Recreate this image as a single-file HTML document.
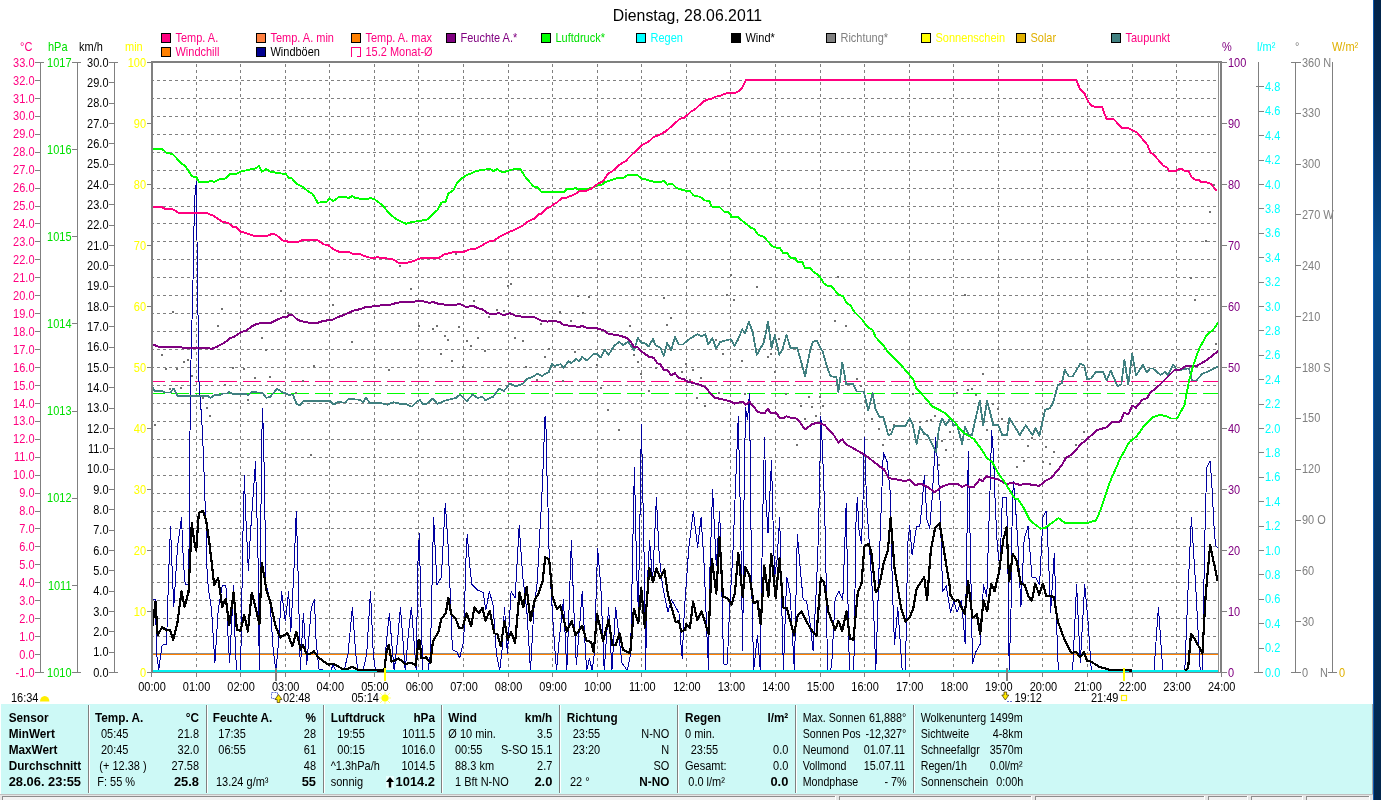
<!DOCTYPE html>
<html lang="de"><head><meta charset="utf-8"><title>Dienstag, 28.06.2011</title>
<style>
html,body{margin:0;padding:0;background:#fff;}
body{width:1381px;height:800px;overflow:hidden;position:relative;font-family:"Liberation Sans", sans-serif;}
svg{position:absolute;left:0;top:0;display:block;will-change:transform;}
svg text{font-family:"Liberation Sans", sans-serif;font-size:12px;}
.ax{stroke:#808080;stroke-width:1;shape-rendering:crispEdges;fill:none;}
.grid{stroke:#808080;stroke-width:1;stroke-dasharray:3 3;shape-rendering:crispEdges;fill:none;}
.b{font-weight:bold;}
.e{text-anchor:end;}
.m{text-anchor:middle;}
</style></head><body>
<svg width="1381" height="800" viewBox="0 0 1381 800">
<rect x="0" y="0" width="1381" height="800" fill="#ffffff"/>
<path class="grid" d="M151 80.5H1218M151 98.5H1218M151 116.5H1218M151 134.5H1218M151 152.5H1218M151 170.5H1218M151 188.5H1218M151 206.5H1218M151 223.5H1218M151 241.5H1218M151 259.5H1218M151 277.5H1218M151 295.5H1218M151 313.5H1218M151 331.5H1218M151 349.5H1218M151 367.5H1218M151 385.5H1218M151 403.5H1218M151 421.5H1218M151 439.5H1218M151 457.5H1218M151 475.5H1218M151 493.5H1218M151 511.5H1218M151 528.5H1218M151 546.5H1218M151 564.5H1218M151 582.5H1218M151 600.5H1218M151 618.5H1218M151 636.5H1218M151 654.5H1218M196.5 64V671M240.5 64V671M285.5 64V671M329.5 64V671M374.5 64V671M418.5 64V671M463.5 64V671M508.5 64V671M552.5 64V671M597.5 64V671M641.5 64V671M686.5 64V671M730.5 64V671M775.5 64V671M820.5 64V671M864.5 64V671M909.5 64V671M953.5 64V671M998.5 64V671M1042.5 64V671M1087.5 64V671M1132.5 64V671M1176.5 64V671"/>
<g fill="none" stroke-linejoin="round" stroke-linecap="butt" shape-rendering="crispEdges">
<path d="M153 381.5H1218" stroke="#ff007f" stroke-width="1" stroke-dasharray="18 6" stroke-dashoffset="6.4" shape-rendering="crispEdges"/>
<path d="M153 393.5H1218" stroke="#00ff00" stroke-width="1" stroke-dasharray="18 6" stroke-dashoffset="6.4" shape-rendering="crispEdges"/>
<path d="M1214 185h0.01M1210 212h0.01M731 275h0.01M757 287h0.01M727 295h0.01M734 300h0.01M838 277h0.01M835 321h0.01M846 326h0.01M716 340h0.01M738 340h0.01M764 339h0.01M779 339h0.01M723 354h0.01M771 354h0.01M281 291h0.01M411 289h0.01M173 312h0.01M222 309h0.01M333 305h0.01M288 313h0.01M218 326h0.01M262 338h0.01M352 342h0.01M266 350h0.01M162 355h0.01M188 360h0.01M184 362h0.01M166 369h0.01M177 369h0.01M233 368h0.01M244 369h0.01M314 366h0.01M389 370h0.01M192 376h0.01M255 378h0.01M270 377h0.01M303 381h0.01M225 385h0.01M170 389h0.01M181 388h0.01M296 393h0.01M203 398h0.01M248 400h0.01M207 408h0.01M210 416h0.01M155 425h0.01M511 284h0.01M508 286h0.01M578 296h0.01M589 297h0.01M664 298h0.01M474 301h0.01M497 310h0.01M504 311h0.01M560 312h0.01M583 313h0.01M489 317h0.01M671 318h0.01M571 321h0.01M541 324h0.01M437 326h0.01M459 327h0.01M433 329h0.01M419 326h0.01M630 326h0.01M667 325h0.01M445 336h0.01M448 340h0.01M478 338h0.01M467 341h0.01M515 338h0.01M523 341h0.01M471 346h0.01M549 349h0.01M485 351h0.01M441 354h0.01M575 352h0.01M545 357h0.01M452 361h0.01M634 355h0.01M638 362h0.01M463 367h0.01M526 367h0.01M597 365h0.01M656 368h0.01M682 372h0.01M641 374h0.01M537 380h0.01M563 381h0.01M601 388h0.01M649 391h0.01M608 410h0.01M619 430h0.01M768 357h0.01M742 361h0.01M686 364h0.01M693 370h0.01M775 372h0.01M701 378h0.01M857 379h0.01M861 386h0.01M690 380h0.01M719 393h0.01M745 394h0.01M786 394h0.01M712 395h0.01M697 398h0.01M809 397h0.01M820 397h0.01M913 394h0.01M705 406h0.01M801 406h0.01M812 407h0.01M823 406h0.01M805 419h0.01M816 416h0.01M872 419h0.01M931 420h0.01M935 416h0.01M920 422h0.01M927 421h0.01M894 425h0.01M879 429h0.01M890 430h0.01M797 445h0.01M883 445h0.01M946 450h0.01M983 374h0.01M968 390h0.01M972 389h0.01M957 393h0.01M976 395h0.01M993 404h0.01M998 409h0.01M1002 419h0.01M987 430h0.01M950 432h0.01M924 434h0.01M1035 430h0.01M1032 438h0.01M1084 432h0.01M942 441h0.01M1028 446h0.01M1046 447h0.01M1076 445h0.01M1054 452h0.01M1024 461h0.01M1043 462h0.01M1050 464h0.01M1017 467h0.01M939 465h0.01M1008 423h0.01M1206 241h0.01M1191 278h0.01M1195 300h0.01M965 295h0.01M1216 344h0.01M400 266h0.01M456 254h0.01M311 455h0.01" stroke="#707070" stroke-width="2" stroke-linecap="square"/>
<path d="M153 653.5H1218" stroke="#909090" stroke-width="1"/>
<path d="M153 654.5H1218" stroke="#ff8000" stroke-width="1"/>
<path d="M151.8 599.7 L155.5 599.7 L156.6 654.0 L158.8 669.4 L162.1 645.2 L166.5 644.1 L168.7 572.6 L170.5 526.4 L172.0 566.0 L173.8 606.7 L177.5 547.3 L181.5 517.6 L183.4 561.6 L185.2 584.7 L188.5 584.7 L189.2 536.0 L189.7 464.0 L190.5 380.0 L192.0 320.0 L193.0 280.0 L194.5 200.0 L196.3 181.8 L197.0 240.0 L198.9 380.0 L200.4 400.0 L202.4 431.0 L203.8 466.0 L205.3 509.0 L206.7 536.0 L206.8 566.0 L208.3 588.0 L211.6 610.0 L214.9 662.8 L218.2 610.0 L222.2 585.4 L225.9 585.4 L228.1 638.6 L229.6 662.8 L233.6 585.4 L235.1 640.8 L236.5 670.5 L240.6 670.5 L242.9 536.0 L244.4 475.2 L245.8 517.0 L248.4 570.4 L249.7 546.0 L251.7 515.0 L255.6 461.0 L256.5 505.0 L257.8 539.6 L259.3 670.5 L260.7 539.6 L261.4 462.0 L262.4 408.0 L263.4 433.0 L264.4 480.0 L266.0 583.6 L269.9 600.0 L273.2 649.6 L275.9 671.0 L278.7 640.8 L281.6 591.3 L285.3 621.0 L288.6 591.3 L290.8 632.0 L294.1 566.0 L296.3 511.0 L297.9 566.0 L300.3 669.4 L303.4 613.3 L306.7 665.0 L311.3 607.8 L314.4 599.7 L316.1 640.8 L319.0 669.4 L330.4 671.0 L333.1 665.0 L335.9 671.0 L344.0 671.0 L348.0 654.0 L352.4 607.1 L355.7 654.0 L357.9 671.0 L363.0 671.0 L366.7 654.0 L370.5 591.3 L373.3 654.0 L375.5 671.0 L384.3 671.0 L386.5 640.8 L389.4 613.3 L391.6 640.8 L394.2 671.0 L397.5 640.8 L400.4 607.1 L403.0 640.8 L405.2 671.0 L408.5 632.0 L411.4 607.1 L414.0 640.8 L416.2 671.0 L417.8 566.0 L419.3 533.7 L420.5 588.0 L422.7 670.5 L428.0 670.5 L430.4 654.0 L433.6 517.1 L437.0 584.7 L441.4 577.0 L445.3 503.0 L448.0 544.0 L450.2 592.4 L452.4 649.6 L456.8 651.8 L459.7 658.0 L463.8 640.8 L465.6 566.0 L467.2 534.3 L469.6 563.8 L471.8 584.3 L477.7 590.2 L483.2 592.4 L485.8 610.0 L489.4 591.3 L493.1 605.6 L496.4 654.0 L499.7 670.5 L501.9 651.8 L504.5 607.1 L507.4 654.0 L511.1 591.3 L515.1 597.9 L519.2 525.9 L522.8 577.0 L526.8 610.0 L530.5 670.5 L533.8 610.0 L537.1 583.6 L540.4 522.0 L541.7 500.0 L543.1 466.7 L544.1 440.0 L545.0 417.0 L545.4 416.0 L546.4 437.0 L547.0 476.0 L548.0 507.0 L548.9 546.0 L550.3 577.0 L553.6 632.0 L556.5 670.5 L559.1 640.8 L563.5 599.7 L566.8 670.5 L569.0 610.0 L571.4 540.1 L573.9 610.0 L576.3 665.0 L580.0 621.0 L582.2 591.3 L584.4 632.0 L586.6 670.5 L589.5 658.4 L592.1 670.5 L594.3 654.0 L597.6 548.4 L600.9 588.0 L604.2 670.5 L608.6 607.1 L611.9 670.5 L615.7 607.1 L618.5 632.0 L621.8 662.8 L627.3 670.5 L630.6 654.0 L632.8 544.0 L634.4 467.2 L636.8 577.0 L638.3 607.8 L639.9 522.0 L641.4 424.2 L644.3 566.0 L645.6 670.5 L647.1 588.0 L649.6 540.1 L652.6 581.4 L656.4 497.1 L659.2 555.0 L662.5 585.8 L668.0 612.2 L671.3 599.7 L675.7 607.1 L679.0 613.3 L681.0 645.0 L682.2 658.4 L684.4 610.0 L688.8 547.3 L693.3 511.2 L697.6 547.3 L701.1 517.1 L704.2 566.0 L706.8 632.0 L708.6 670.5 L709.7 577.0 L712.6 489.3 L716.3 566.0 L719.7 511.2 L721.8 588.0 L723.6 664.0 L727.3 664.0 L729.5 610.0 L732.8 555.0 L735.0 500.0 L738.3 416.0 L740.5 520.0 L742.7 650.7 L744.0 500.0 L745.5 408.0 L747.5 420.0 L749.4 393.5 L750.4 470.0 L751.5 577.0 L753.7 670.5 L757.4 635.3 L760.3 670.5 L762.5 526.4 L764.5 437.9 L766.0 500.0 L768.0 533.0 L771.5 460.8 L773.0 520.0 L774.6 577.0 L777.0 560.0 L779.7 517.1 L781.6 599.0 L783.4 670.5 L786.7 577.0 L790.0 592.4 L794.4 670.5 L797.3 534.3 L801.0 577.0 L803.2 599.7 L806.5 601.2 L809.8 621.0 L813.1 650.7 L816.4 588.0 L818.0 546.0 L819.5 490.0 L820.8 416.0 L822.0 440.0 L823.7 480.0 L825.6 546.0 L827.5 670.5 L830.7 670.5 L831.8 662.8 L835.1 599.0 L838.9 591.3 L842.8 599.7 L846.2 503.0 L847.7 588.0 L849.4 670.5 L853.8 670.5 L856.0 522.0 L857.3 497.1 L859.0 530.0 L861.5 544.0 L863.0 500.0 L864.4 437.9 L866.5 500.0 L871.4 577.0 L873.6 610.0 L875.8 670.5 L879.1 566.0 L881.5 500.0 L883.3 452.2 L887.2 462.0 L890.2 492.0 L892.4 588.0 L894.5 645.0 L897.8 607.8 L902.2 670.5 L905.5 670.5 L907.7 544.0 L909.7 525.9 L912.1 555.0 L916.5 526.4 L919.8 526.4 L922.0 505.0 L924.4 475.0 L927.0 520.0 L929.7 528.6 L932.0 500.0 L935.7 437.9 L938.0 470.0 L940.0 500.0 L941.8 566.0 L942.9 591.3 L946.2 585.8 L950.5 612.2 L953.8 601.2 L957.1 612.2 L961.5 600.1 L965.2 644.1 L966.8 546.0 L968.3 451.8 L970.3 546.0 L972.5 664.0 L975.8 651.8 L980.2 644.1 L983.5 584.7 L986.8 596.8 L988.2 546.0 L990.0 491.0 L991.6 430.6 L993.6 455.0 L994.7 491.0 L996.1 522.0 L997.3 546.0 L1000.0 570.4 L1001.8 511.7 L1002.8 497.0 L1006.4 497.0 L1007.5 532.0 L1009.2 670.5 L1011.0 610.0 L1012.3 503.0 L1013.5 481.2 L1015.0 500.0 L1016.4 520.0 L1018.0 546.0 L1020.9 607.1 L1024.2 538.5 L1028.1 526.3 L1031.9 577.0 L1035.6 577.0 L1039.6 584.7 L1042.9 517.6 L1045.4 511.7 L1046.4 511.2 L1048.4 555.0 L1050.6 612.2 L1054.3 553.9 L1056.1 610.0 L1058.3 670.5 L1072.6 670.5 L1076.6 584.7 L1080.3 662.8 L1084.7 584.7 L1088.0 621.0 L1091.3 670.5 L1154.0 670.5 L1158.4 607.1 L1162.8 670.5 L1184.8 670.5 L1188.1 588.0 L1191.4 517.2 L1195.8 588.0 L1200.2 670.5 L1202.4 670.5 L1204.6 546.0 L1206.0 493.0 L1206.6 468.0 L1210.2 461.0 L1212.2 491.0 L1214.3 532.0 L1215.7 546.0 L1217.8 547.3" stroke="#0000a0" stroke-width="1"/>
<path d="M153 671.1H1218.5" stroke="#00f0f0" stroke-width="1.5"/>
<path d="M151.6 386.2 L154.9 391.0 L161.7 391.0 L164.7 392.4 L170.5 392.4 L173.5 388.5 L177.4 395.7 L198.9 395.9 L207.7 395.9 L210.6 397.9 L214.5 395.0 L219.4 395.3 L223.3 393.4 L227.2 393.4 L229.2 392.0 L233.1 393.8 L245.8 393.8 L247.8 395.3 L251.7 392.0 L262.4 392.8 L266.3 397.9 L270.2 396.7 L277.1 388.9 L282.9 392.4 L288.8 394.8 L292.7 394.4 L296.6 404.1 L300.5 405.1 L303.5 400.8 L329.9 400.8 L333.8 404.5 L337.7 402.2 L345.5 402.6 L348.4 398.9 L360.2 399.8 L363.1 402.2 L366.0 397.9 L369.9 403.2 L376.8 403.2 L379.7 402.8 L387.5 404.7 L393.4 402.2 L399.3 403.6 L406.1 404.1 L412.0 406.7 L416.9 401.6 L420.0 400.2 L422.8 403.8 L426.7 403.8 L432.6 398.7 L437.5 403.8 L446.3 400.2 L456.1 397.9 L460.0 394.4 L466.8 401.2 L472.7 394.4 L477.6 397.9 L482.4 396.9 L485.4 400.2 L493.2 396.7 L499.1 388.9 L504.0 390.9 L509.8 383.6 L515.7 386.2 L522.5 384.0 L527.4 378.7 L532.3 377.2 L537.2 373.8 L542.1 375.8 L548.9 371.9 L551.9 364.1 L554.8 366.0 L560.7 364.1 L563.6 368.0 L568.5 361.1 L571.4 363.1 L576.3 358.8 L579.2 361.5 L582.2 356.8 L587.0 360.7 L593.9 353.7 L596.8 353.7 L600.7 357.6 L604.6 349.8 L608.5 354.9 L614.4 345.5 L619.3 342.0 L623.2 345.1 L628.1 341.6 L634.0 350.4 L637.9 338.1 L641.8 343.1 L645.7 343.5 L648.6 346.5 L653.1 338.7 L655.5 345.5 L660.4 347.8 L663.7 355.7 L667.2 343.0 L671.1 350.4 L675.0 336.7 L678.9 344.5 L682.8 344.5 L685.0 342.6 L690.8 338.1 L697.6 334.2 L701.5 336.2 L705.4 334.2 L708.3 344.6 L712.3 338.1 L716.2 348.5 L720.1 342.0 L730.8 339.1 L734.3 345.9 L738.7 338.1 L742.2 329.3 L745.1 333.2 L748.8 321.5 L752.7 332.3 L756.8 354.7 L764.1 342.0 L768.0 321.5 L771.5 347.9 L774.8 335.2 L779.3 354.7 L782.6 348.9 L786.5 335.2 L790.5 347.9 L797.3 347.9 L805.1 376.2 L810.0 350.8 L812.9 341.6 L816.9 341.1 L822.7 351.8 L826.6 365.5 L830.5 376.2 L836.4 377.2 L838.4 391.9 L842.3 362.6 L846.2 384.1 L853.0 384.1 L856.9 391.5 L863.8 391.5 L868.3 410.5 L872.6 393.3 L875.5 409.5 L879.4 416.9 L883.3 416.9 L888.2 434.9 L891.1 434.5 L894.1 426.1 L905.8 425.7 L909.7 418.3 L912.6 424.5 L916.6 443.7 L920.1 427.1 L924.4 433.9 L927.3 434.9 L936.1 452.5 L939.0 428.1 L942.0 418.3 L945.9 425.1 L950.0 418.3 L951.4 418.8 L953.3 425.3 L957.2 425.3 L962.1 443.8 L965.0 427.2 L969.0 435.0 L971.9 435.0 L979.7 400.8 L983.2 425.3 L987.1 400.8 L993.4 425.3 L998.3 425.3 L1002.2 435.0 L1007.1 435.0 L1009.4 417.8 L1019.8 435.0 L1025.7 425.3 L1032.5 435.0 L1035.4 428.2 L1039.3 436.0 L1045.2 409.6 L1050.1 408.1 L1053.0 402.8 L1057.9 385.2 L1061.8 383.2 L1064.8 369.6 L1068.7 376.4 L1072.6 376.4 L1080.4 363.7 L1084.3 365.6 L1087.2 379.3 L1091.1 378.3 L1096.0 371.9 L1102.9 371.9 L1106.8 380.3 L1110.7 370.5 L1117.5 386.2 L1121.4 384.2 L1124.4 359.8 L1128.3 384.2 L1132.2 353.9 L1136.1 375.4 L1143.0 364.7 L1146.9 372.5 L1150.0 368.6 L1153.0 368.4 L1160.5 375.0 L1165.0 372.0 L1168.0 375.0 L1173.4 364.5 L1177.0 370.5 L1184.5 369.0 L1189.0 368.4 L1192.0 380.4 L1196.5 380.4 L1202.5 373.5 L1207.0 372.0 L1218.1 366.6" stroke="#408080" stroke-width="1.8"/>
<path d="M151.6 343.9 L157.8 346.5 L169.6 347.1 L181.3 347.1 L183.2 348.0 L206.7 348.0 L211.6 348.8 L217.4 346.5 L225.3 342.2 L230.2 338.1 L234.1 336.7 L240.9 332.2 L246.8 330.4 L251.7 326.3 L256.5 324.0 L261.4 323.0 L271.2 322.6 L277.1 319.7 L282.9 317.1 L286.9 316.8 L289.8 314.8 L292.7 315.2 L296.6 319.1 L300.5 321.1 L308.4 322.6 L318.1 322.6 L324.0 320.7 L331.8 320.1 L337.7 317.1 L343.5 315.2 L353.3 310.7 L361.1 308.9 L366.0 306.8 L374.8 306.4 L380.7 305.4 L389.5 305.0 L394.4 303.5 L402.2 301.9 L410.0 302.5 L420.0 300.5 L429.7 302.9 L432.6 301.9 L438.5 303.9 L446.3 304.8 L456.1 304.8 L460.0 303.9 L465.8 306.8 L473.7 306.0 L477.6 308.3 L482.4 309.3 L487.3 313.2 L492.2 314.2 L499.1 313.2 L504.0 315.2 L509.8 313.2 L516.7 316.2 L524.5 316.8 L534.3 317.1 L542.1 321.1 L547.9 321.6 L551.9 320.7 L559.7 322.0 L563.6 325.0 L571.4 325.9 L579.2 326.9 L582.2 325.9 L587.0 327.9 L596.8 328.3 L603.7 330.4 L608.5 333.8 L620.3 335.7 L627.1 338.1 L631.0 342.2 L634.0 347.1 L637.9 347.4 L641.8 351.7 L649.6 357.2 L653.5 357.6 L657.4 363.1 L660.4 364.5 L664.3 370.5 L667.2 369.9 L671.1 375.2 L675.0 373.3 L678.9 377.8 L685.0 379.7 L687.8 381.7 L697.6 384.1 L705.4 387.0 L709.3 391.9 L715.2 397.8 L721.1 399.1 L729.9 401.1 L734.7 403.6 L742.6 401.7 L745.5 405.0 L749.4 401.7 L754.3 407.5 L758.2 412.4 L765.0 412.8 L768.0 408.9 L770.9 413.4 L775.8 412.4 L779.7 417.9 L783.6 417.9 L786.5 416.3 L791.4 417.9 L797.3 418.7 L805.1 429.6 L812.9 423.6 L819.8 423.2 L824.7 425.1 L834.4 435.9 L838.4 442.7 L842.3 439.2 L846.2 444.7 L852.0 447.6 L865.7 455.4 L880.0 466.7 L883.9 469.3 L888.8 478.1 L899.6 480.0 L904.4 481.0 L910.3 480.0 L915.2 484.9 L921.1 483.9 L928.9 487.8 L934.7 492.3 L941.6 486.9 L948.4 484.3 L958.2 484.3 L962.1 486.9 L966.0 484.9 L969.0 486.9 L973.8 486.9 L979.7 479.4 L982.6 481.4 L986.5 476.1 L991.4 478.1 L997.3 479.0 L1006.1 483.9 L1012.9 482.9 L1019.8 484.9 L1026.6 483.9 L1039.3 485.9 L1045.2 481.0 L1051.1 478.1 L1056.0 472.2 L1061.8 465.3 L1065.7 458.1 L1071.6 454.6 L1081.4 443.8 L1087.2 439.0 L1097.0 430.2 L1106.8 427.2 L1111.7 422.3 L1120.5 421.4 L1124.0 412.6 L1128.3 414.5 L1132.2 405.7 L1136.1 407.7 L1142.0 399.9 L1146.9 398.3 L1150.0 393.0 L1159.0 385.5 L1166.5 378.0 L1174.0 370.5 L1180.0 369.6 L1186.0 366.0 L1196.5 366.0 L1207.0 360.0 L1218.1 351.0" stroke="#800080" stroke-width="2"/>
<path d="M151.8 630.9 L155.5 601.7 L157.7 635.3 L162.1 627.0 L166.5 630.5 L169.8 629.8 L173.1 639.7 L177.5 622.1 L181.5 591.3 L184.5 606.7 L188.5 592.4 L191.8 523.1 L194.0 539.6 L196.2 550.6 L198.8 513.2 L202.8 510.6 L206.1 519.8 L209.4 542.9 L214.2 584.7 L218.2 578.1 L222.2 606.7 L225.9 599.0 L229.2 625.4 L233.6 592.4 L236.9 629.8 L240.6 630.9 L244.2 614.9 L247.9 631.6 L251.7 592.8 L255.6 607.8 L259.4 624.3 L261.8 562.7 L264.4 577.0 L266.6 591.3 L269.9 600.1 L275.4 625.4 L280.3 637.5 L287.5 633.1 L292.4 646.3 L296.3 631.6 L300.7 649.6 L302.9 645.2 L306.7 654.0 L310.6 653.6 L313.9 651.4 L318.3 657.3 L328.2 664.6 L333.1 663.9 L342.5 668.8 L348.0 668.8 L352.4 666.8 L357.9 669.9 L381.0 670.5 L384.3 670.5 L386.5 651.8 L388.7 645.2 L391.6 661.7 L398.6 658.4 L405.2 663.9 L411.8 662.8 L415.8 665.5 L418.4 640.8 L419.4 639.7 L421.6 658.4 L426.0 657.3 L430.4 662.8 L433.0 640.8 L438.1 633.1 L441.4 618.8 L445.8 613.3 L448.4 597.9 L451.3 614.4 L455.7 618.8 L459.0 627.6 L462.3 628.3 L466.7 613.3 L471.1 626.5 L474.4 607.2 L478.8 613.3 L482.5 607.8 L485.4 620.6 L489.8 611.1 L494.2 633.1 L497.5 634.7 L500.8 646.3 L504.5 621.0 L507.8 639.7 L511.1 632.0 L515.1 643.0 L519.5 592.4 L523.3 607.2 L526.6 586.9 L530.5 621.0 L534.9 599.0 L538.2 594.6 L542.6 581.4 L545.3 557.2 L549.2 559.4 L552.5 596.8 L556.9 608.9 L560.2 605.6 L566.8 631.6 L571.7 621.0 L575.6 635.3 L582.2 625.9 L586.6 640.8 L591.0 641.9 L593.7 651.8 L597.2 614.4 L603.1 640.8 L608.6 619.9 L612.4 645.2 L615.7 645.2 L619.6 633.6 L622.9 649.6 L630.2 653.4 L633.9 608.9 L638.3 623.2 L641.2 588.0 L644.9 627.6 L649.3 568.2 L653.1 582.5 L656.4 568.2 L660.3 578.1 L664.3 569.3 L668.0 594.6 L675.7 622.1 L679.0 621.0 L681.2 631.6 L685.0 629.8 L686.2 624.3 L689.9 627.6 L693.2 601.7 L697.2 619.9 L701.6 611.1 L708.6 634.2 L711.9 559.4 L716.3 593.5 L719.6 537.4 L722.9 596.8 L727.3 597.9 L731.7 604.5 L735.0 592.4 L738.3 552.8 L742.7 596.8 L745.3 567.1 L749.3 574.8 L753.7 603.4 L757.4 601.2 L760.7 624.3 L764.3 566.0 L768.4 596.8 L771.3 553.9 L775.7 597.9 L779.4 558.3 L783.4 607.8 L786.7 607.8 L794.0 634.7 L797.7 615.5 L801.5 611.1 L809.8 627.6 L816.4 636.0 L820.8 578.1 L824.1 582.5 L828.5 612.2 L835.1 629.8 L838.4 621.0 L842.2 630.9 L846.6 611.1 L849.9 638.6 L853.4 639.7 L857.8 592.4 L861.5 583.6 L864.4 546.2 L868.8 544.0 L871.4 552.8 L875.8 592.4 L879.1 586.9 L883.5 563.8 L887.9 550.6 L890.6 517.6 L894.5 568.2 L901.1 607.8 L905.5 621.5 L909.9 616.6 L913.2 608.9 L916.5 589.1 L924.2 577.0 L927.1 600.1 L930.8 550.6 L935.2 527.5 L939.6 523.1 L944.0 550.6 L950.0 588.0 L950.5 595.7 L954.9 601.2 L958.2 600.1 L964.8 614.4 L968.1 581.4 L972.5 617.7 L976.9 614.4 L980.2 634.2 L983.5 600.1 L987.2 611.1 L991.2 583.6 L994.5 591.3 L998.9 572.6 L1003.3 539.6 L1006.6 527.5 L1009.2 581.4 L1012.8 553.9 L1016.5 560.5 L1020.9 583.6 L1024.6 584.7 L1028.6 596.8 L1031.9 600.6 L1035.2 583.6 L1039.2 594.6 L1042.9 583.6 L1046.2 595.7 L1053.9 596.8 L1057.7 621.0 L1064.9 640.8 L1071.5 652.9 L1075.9 651.8 L1080.3 657.3 L1084.1 651.8 L1086.9 660.6 L1091.3 661.7 L1099.0 666.8 L1110.0 669.9 L1132.0 670.5" stroke="#000" stroke-width="2.2"/>
<path d="M1184.8 670.5 L1188.1 668.3 L1191.0 633.6 L1195.8 640.8 L1202.4 653.4 L1205.7 594.6 L1210.1 545.1 L1217.8 581.4" stroke="#000" stroke-width="2.2"/>
<path d="M151.6 149.0 L162.1 149.0 L166.6 152.9 L172.5 153.9 L181.3 163.2 L185.2 166.2 L192.0 176.3 L196.3 177.3 L198.9 181.8 L207.7 181.8 L210.6 180.8 L214.5 181.8 L220.4 178.9 L225.3 178.5 L229.8 174.4 L236.0 174.0 L241.9 171.1 L247.8 170.1 L251.7 169.1 L255.6 168.5 L258.9 165.8 L261.8 171.6 L266.3 169.1 L270.2 171.6 L277.1 173.0 L285.9 174.0 L288.4 177.5 L291.7 178.3 L296.6 183.8 L302.5 186.7 L308.4 191.6 L312.3 193.5 L317.7 202.7 L326.9 201.7 L329.5 198.4 L333.4 201.0 L338.7 197.1 L345.5 197.1 L348.4 198.0 L352.3 196.1 L355.3 198.0 L365.1 199.4 L370.9 198.0 L374.8 199.4 L382.6 205.3 L389.5 213.7 L396.3 219.3 L406.1 223.8 L412.0 221.9 L420.0 220.9 L421.8 220.5 L427.7 219.3 L433.6 213.1 L437.5 210.2 L441.4 202.7 L445.9 201.4 L448.2 193.5 L453.1 190.6 L457.0 182.8 L462.9 177.5 L467.8 174.6 L471.7 173.4 L475.6 171.1 L483.4 169.7 L490.3 169.1 L493.6 171.1 L497.1 169.1 L501.0 171.6 L505.9 171.6 L510.8 169.7 L515.7 169.1 L520.6 169.1 L524.5 175.9 L533.3 186.3 L537.2 187.1 L541.1 191.6 L564.6 191.6 L567.5 188.7 L573.4 188.7 L575.3 187.7 L578.2 189.6 L583.1 189.0 L588.0 188.7 L591.9 188.1 L596.8 185.3 L601.7 184.7 L605.6 181.8 L609.5 180.8 L614.4 178.9 L618.3 177.9 L623.2 177.9 L627.1 175.4 L637.9 175.4 L641.8 178.9 L645.7 179.5 L649.6 180.8 L654.5 181.8 L661.3 181.8 L664.3 180.8 L667.2 184.7 L672.1 183.8 L677.0 188.3 L680.9 189.6 L685.0 190.6 L689.8 191.0 L693.7 195.5 L700.5 196.9 L704.4 200.4 L709.3 200.8 L711.7 206.6 L719.1 206.6 L724.0 211.5 L727.9 212.1 L731.2 215.4 L731.2 217.0 L737.7 217.0 L750.4 227.4 L754.3 229.3 L758.2 234.8 L764.1 237.1 L771.9 245.9 L775.8 247.5 L779.7 247.9 L783.0 252.8 L787.1 252.8 L790.5 258.1 L795.3 258.1 L797.3 262.0 L802.2 262.0 L805.1 267.8 L810.0 267.8 L812.9 271.4 L818.8 275.3 L823.7 283.1 L827.6 286.0 L831.5 286.0 L838.4 294.8 L843.2 296.4 L846.2 302.6 L850.1 305.0 L854.0 311.4 L861.8 319.3 L867.7 327.1 L872.6 330.0 L875.5 336.9 L884.3 346.6 L887.2 351.5 L892.1 356.0 L901.5 365.6 L913.2 379.3 L916.2 388.1 L927.9 400.8 L931.8 406.1 L944.5 412.6 L955.3 422.7 L958.2 427.2 L964.1 433.1 L973.8 439.0 L981.7 449.7 L986.5 457.5 L992.4 462.4 L998.3 473.2 L1005.1 482.9 L1010.0 490.8 L1014.9 498.6 L1017.8 499.0 L1022.7 506.0 L1030.0 520.5 L1040.5 528.6 L1045.0 528.0 L1058.5 518.1 L1064.5 522.6 L1088.5 522.6 L1096.0 520.5 L1100.5 510.0 L1109.5 483.0 L1120.0 459.0 L1129.0 442.5 L1136.5 436.5 L1144.0 426.0 L1153.0 417.0 L1160.5 414.9 L1166.5 416.4 L1171.0 418.5 L1177.0 418.5 L1184.5 405.0 L1189.0 381.0 L1193.5 364.5 L1199.5 348.0 L1207.0 334.5 L1213.0 330.0 L1218.1 322.5" stroke="#00ff00" stroke-width="1.9"/>
<path d="M151.6 207.2 L162.1 207.2 L165.6 209.2 L172.5 209.2 L179.3 213.1 L206.7 213.1 L212.6 215.4 L218.4 219.0 L222.7 221.9 L228.2 222.9 L233.1 226.8 L236.0 227.2 L240.9 231.7 L247.8 233.6 L253.6 235.6 L267.3 235.6 L273.2 233.6 L277.1 235.6 L282.9 240.5 L286.9 240.9 L288.8 242.4 L293.7 241.8 L296.6 242.4 L302.5 240.1 L317.2 240.1 L324.0 244.4 L327.9 245.0 L333.8 249.6 L338.7 251.6 L347.5 251.6 L352.3 253.6 L359.2 253.8 L363.1 255.5 L369.0 257.5 L374.8 257.9 L377.8 257.1 L380.7 258.1 L386.6 258.4 L392.4 259.0 L398.3 262.6 L408.1 262.6 L413.9 261.0 L420.0 258.4 L438.5 258.1 L444.3 254.5 L453.1 252.2 L463.9 251.8 L468.8 249.6 L475.6 248.7 L481.5 245.7 L486.4 242.8 L490.3 241.0 L494.2 240.5 L499.1 236.9 L508.8 232.1 L515.7 229.3 L522.5 225.8 L527.4 221.9 L534.3 218.6 L538.2 214.5 L541.1 213.7 L547.0 208.2 L549.9 207.2 L553.8 204.3 L556.7 202.7 L561.6 198.4 L566.5 197.8 L575.3 193.9 L579.2 191.2 L587.0 190.6 L591.9 188.3 L597.8 183.8 L602.7 181.4 L608.5 173.4 L612.5 171.1 L619.3 164.8 L626.1 160.7 L632.0 154.4 L635.9 151.1 L641.8 145.2 L648.6 141.7 L653.5 137.2 L661.3 133.9 L666.2 131.0 L680.0 118.7 L683.9 118.1 L690.8 111.8 L695.6 108.9 L703.5 101.4 L707.4 99.7 L710.3 99.1 L716.2 96.6 L721.1 95.6 L724.0 94.2 L728.9 92.8 L735.7 92.8 L738.7 91.3 L742.2 87.8 L744.5 83.1 L746.1 79.9 L950.0 79.9 L1076.1 79.9 L1080.1 89.3 L1084.9 94.2 L1087.9 101.1 L1091.8 105.9 L1094.7 106.9 L1102.1 106.9 L1106.4 118.7 L1113.3 118.7 L1121.7 127.8 L1128.0 127.8 L1136.8 132.3 L1147.5 145.0 L1150.4 152.3 L1154.3 155.2 L1163.1 165.6 L1167.1 167.5 L1169.0 170.9 L1175.9 170.9 L1178.8 168.9 L1181.7 168.9 L1183.7 170.5 L1188.6 170.9 L1191.5 177.3 L1195.4 179.6 L1199.3 180.0 L1201.3 182.0 L1206.2 182.0 L1211.0 184.1 L1216.9 191.0" stroke="#ff007f" stroke-width="1.9"/>
</g>
<g shape-rendering="crispEdges">
<rect x="151" y="61" width="1070" height="2" fill="#808080"/>
<rect x="151" y="61" width="2" height="612" fill="#808080"/>
<rect x="1218" y="62" width="1" height="611" fill="#909090"/>
<rect x="1220" y="61" width="2" height="612" fill="#808080"/>
<rect x="147" y="672" width="1075" height="1" fill="#808080"/>
</g>
<path class="ax" d="M40.5 62V673M36 62.5H44M36 672.5H44M35 62.5H41M35 80.5H41M35 98.5H41M35 116.5H41M35 134.5H41M35 152.5H41M35 170.5H41M35 188.5H41M35 206.5H41M35 223.5H41M35 241.5H41M35 259.5H41M35 277.5H41M35 295.5H41M35 313.5H41M35 331.5H41M35 349.5H41M35 367.5H41M35 385.5H41M35 403.5H41M35 421.5H41M35 439.5H41M35 457.5H41M35 475.5H41M35 493.5H41M35 511.5H41M35 528.5H41M35 546.5H41M35 564.5H41M35 582.5H41M35 600.5H41M35 618.5H41M35 636.5H41M35 654.5H41M35 672.5H41M77.5 62V673M73 62.5H81M73 672.5H81M72 62.5H78M72 149.5H78M72 236.5H78M72 323.5H78M72 411.5H78M72 498.5H78M72 585.5H78M72 672.5H78M114.5 62V673M110 62.5H118M110 672.5H118M109 62.5H115M109 82.5H115M109 103.5H115M109 123.5H115M109 143.5H115M109 164.5H115M109 184.5H115M109 204.5H115M109 225.5H115M109 245.5H115M109 265.5H115M109 286.5H115M109 306.5H115M109 326.5H115M109 347.5H115M109 367.5H115M109 387.5H115M109 408.5H115M109 428.5H115M109 448.5H115M109 469.5H115M109 489.5H115M109 509.5H115M109 530.5H115M109 550.5H115M109 570.5H115M109 591.5H115M109 611.5H115M109 631.5H115M109 652.5H115M109 672.5H115M147 62.5H152M147 123.5H152M147 184.5H152M147 245.5H152M147 306.5H152M147 367.5H152M147 428.5H152M147 489.5H152M147 550.5H152M147 611.5H152M147 672.5H152M1221 62.5H1227M1221 123.5H1227M1221 184.5H1227M1221 245.5H1227M1221 306.5H1227M1221 367.5H1227M1221 428.5H1227M1221 489.5H1227M1221 550.5H1227M1221 611.5H1227M1221 672.5H1227M1258.5 62V673M1254 672.5H1263M1259 648.5H1264M1259 623.5H1264M1259 599.5H1264M1259 574.5H1264M1259 550.5H1264M1259 526.5H1264M1259 501.5H1264M1259 477.5H1264M1259 452.5H1264M1259 428.5H1264M1259 404.5H1264M1259 379.5H1264M1259 355.5H1264M1259 330.5H1264M1259 306.5H1264M1259 282.5H1264M1259 257.5H1264M1259 233.5H1264M1259 208.5H1264M1259 184.5H1264M1259 160.5H1264M1259 135.5H1264M1259 111.5H1264M1256 86.5H1264M1295.5 62V673M1291 62.5H1301M1296 113.5H1301M1296 164.5H1301M1296 214.5H1301M1296 265.5H1301M1296 316.5H1301M1296 367.5H1301M1296 418.5H1301M1296 469.5H1301M1296 520.5H1301M1296 570.5H1301M1296 621.5H1301M1291 672.5H1301M1332.5 62V673M1328 672.5H1337"/>
<text class="e" transform="translate(34.5 66.6) scale(0.915 1)" fill="#ff007f">33.0</text>
<text class="e" transform="translate(34.5 84.5) scale(0.915 1)" fill="#ff007f">32.0</text>
<text class="e" transform="translate(34.5 102.5) scale(0.915 1)" fill="#ff007f">31.0</text>
<text class="e" transform="translate(34.5 120.4) scale(0.915 1)" fill="#ff007f">30.0</text>
<text class="e" transform="translate(34.5 138.4) scale(0.915 1)" fill="#ff007f">29.0</text>
<text class="e" transform="translate(34.5 156.3) scale(0.915 1)" fill="#ff007f">28.0</text>
<text class="e" transform="translate(34.5 174.2) scale(0.915 1)" fill="#ff007f">27.0</text>
<text class="e" transform="translate(34.5 192.2) scale(0.915 1)" fill="#ff007f">26.0</text>
<text class="e" transform="translate(34.5 210.1) scale(0.915 1)" fill="#ff007f">25.0</text>
<text class="e" transform="translate(34.5 228.1) scale(0.915 1)" fill="#ff007f">24.0</text>
<text class="e" transform="translate(34.5 246.0) scale(0.915 1)" fill="#ff007f">23.0</text>
<text class="e" transform="translate(34.5 264.0) scale(0.915 1)" fill="#ff007f">22.0</text>
<text class="e" transform="translate(34.5 281.9) scale(0.915 1)" fill="#ff007f">21.0</text>
<text class="e" transform="translate(34.5 299.8) scale(0.915 1)" fill="#ff007f">20.0</text>
<text class="e" transform="translate(34.5 317.8) scale(0.915 1)" fill="#ff007f">19.0</text>
<text class="e" transform="translate(34.5 335.7) scale(0.915 1)" fill="#ff007f">18.0</text>
<text class="e" transform="translate(34.5 353.7) scale(0.915 1)" fill="#ff007f">17.0</text>
<text class="e" transform="translate(34.5 371.6) scale(0.915 1)" fill="#ff007f">16.0</text>
<text class="e" transform="translate(34.5 389.5) scale(0.915 1)" fill="#ff007f">15.0</text>
<text class="e" transform="translate(34.5 407.5) scale(0.915 1)" fill="#ff007f">14.0</text>
<text class="e" transform="translate(34.5 425.4) scale(0.915 1)" fill="#ff007f">13.0</text>
<text class="e" transform="translate(34.5 443.4) scale(0.915 1)" fill="#ff007f">12.0</text>
<text class="e" transform="translate(34.5 461.3) scale(0.915 1)" fill="#ff007f">11.0</text>
<text class="e" transform="translate(34.5 479.2) scale(0.915 1)" fill="#ff007f">10.0</text>
<text class="e" transform="translate(34.5 497.2) scale(0.915 1)" fill="#ff007f">9.0</text>
<text class="e" transform="translate(34.5 515.1) scale(0.915 1)" fill="#ff007f">8.0</text>
<text class="e" transform="translate(34.5 533.1) scale(0.915 1)" fill="#ff007f">7.0</text>
<text class="e" transform="translate(34.5 551.0) scale(0.915 1)" fill="#ff007f">6.0</text>
<text class="e" transform="translate(34.5 569.0) scale(0.915 1)" fill="#ff007f">5.0</text>
<text class="e" transform="translate(34.5 586.9) scale(0.915 1)" fill="#ff007f">4.0</text>
<text class="e" transform="translate(34.5 604.8) scale(0.915 1)" fill="#ff007f">3.0</text>
<text class="e" transform="translate(34.5 622.8) scale(0.915 1)" fill="#ff007f">2.0</text>
<text class="e" transform="translate(34.5 640.7) scale(0.915 1)" fill="#ff007f">1.0</text>
<text class="e" transform="translate(34.5 658.7) scale(0.915 1)" fill="#ff007f">0.0</text>
<text class="e" transform="translate(34.5 676.6) scale(0.915 1)" fill="#ff007f">-1.0</text>
<text class="e" transform="translate(71.5 66.6) scale(0.915 1)" fill="#00e000">1017</text>
<text class="e" transform="translate(71.5 153.7) scale(0.915 1)" fill="#00e000">1016</text>
<text class="e" transform="translate(71.5 240.9) scale(0.915 1)" fill="#00e000">1015</text>
<text class="e" transform="translate(71.5 328.0) scale(0.915 1)" fill="#00e000">1014</text>
<text class="e" transform="translate(71.5 415.2) scale(0.915 1)" fill="#00e000">1013</text>
<text class="e" transform="translate(71.5 502.3) scale(0.915 1)" fill="#00e000">1012</text>
<text class="e" transform="translate(71.5 589.5) scale(0.915 1)" fill="#00e000">1011</text>
<text class="e" transform="translate(71.5 676.6) scale(0.915 1)" fill="#00e000">1010</text>
<text class="e" transform="translate(108.5 66.6) scale(0.915 1)" fill="#000">30.0</text>
<text class="e" transform="translate(108.5 86.9) scale(0.915 1)" fill="#000">29.0</text>
<text class="e" transform="translate(108.5 107.3) scale(0.915 1)" fill="#000">28.0</text>
<text class="e" transform="translate(108.5 127.6) scale(0.915 1)" fill="#000">27.0</text>
<text class="e" transform="translate(108.5 147.9) scale(0.915 1)" fill="#000">26.0</text>
<text class="e" transform="translate(108.5 168.3) scale(0.915 1)" fill="#000">25.0</text>
<text class="e" transform="translate(108.5 188.6) scale(0.915 1)" fill="#000">24.0</text>
<text class="e" transform="translate(108.5 208.9) scale(0.915 1)" fill="#000">23.0</text>
<text class="e" transform="translate(108.5 229.3) scale(0.915 1)" fill="#000">22.0</text>
<text class="e" transform="translate(108.5 249.6) scale(0.915 1)" fill="#000">21.0</text>
<text class="e" transform="translate(108.5 269.9) scale(0.915 1)" fill="#000">20.0</text>
<text class="e" transform="translate(108.5 290.3) scale(0.915 1)" fill="#000">19.0</text>
<text class="e" transform="translate(108.5 310.6) scale(0.915 1)" fill="#000">18.0</text>
<text class="e" transform="translate(108.5 330.9) scale(0.915 1)" fill="#000">17.0</text>
<text class="e" transform="translate(108.5 351.3) scale(0.915 1)" fill="#000">16.0</text>
<text class="e" transform="translate(108.5 371.6) scale(0.915 1)" fill="#000">15.0</text>
<text class="e" transform="translate(108.5 391.9) scale(0.915 1)" fill="#000">14.0</text>
<text class="e" transform="translate(108.5 412.3) scale(0.915 1)" fill="#000">13.0</text>
<text class="e" transform="translate(108.5 432.6) scale(0.915 1)" fill="#000">12.0</text>
<text class="e" transform="translate(108.5 452.9) scale(0.915 1)" fill="#000">11.0</text>
<text class="e" transform="translate(108.5 473.3) scale(0.915 1)" fill="#000">10.0</text>
<text class="e" transform="translate(108.5 493.6) scale(0.915 1)" fill="#000">9.0</text>
<text class="e" transform="translate(108.5 513.9) scale(0.915 1)" fill="#000">8.0</text>
<text class="e" transform="translate(108.5 534.3) scale(0.915 1)" fill="#000">7.0</text>
<text class="e" transform="translate(108.5 554.6) scale(0.915 1)" fill="#000">6.0</text>
<text class="e" transform="translate(108.5 574.9) scale(0.915 1)" fill="#000">5.0</text>
<text class="e" transform="translate(108.5 595.3) scale(0.915 1)" fill="#000">4.0</text>
<text class="e" transform="translate(108.5 615.6) scale(0.915 1)" fill="#000">3.0</text>
<text class="e" transform="translate(108.5 635.9) scale(0.915 1)" fill="#000">2.0</text>
<text class="e" transform="translate(108.5 656.3) scale(0.915 1)" fill="#000">1.0</text>
<text class="e" transform="translate(108.5 676.6) scale(0.915 1)" fill="#000">0.0</text>
<text class="e" transform="translate(146.0 66.6) scale(0.915 1)" fill="#ffff00">100</text>
<text class="e" transform="translate(146.0 127.6) scale(0.915 1)" fill="#ffff00">90</text>
<text class="e" transform="translate(146.0 188.6) scale(0.915 1)" fill="#ffff00">80</text>
<text class="e" transform="translate(146.0 249.6) scale(0.915 1)" fill="#ffff00">70</text>
<text class="e" transform="translate(146.0 310.6) scale(0.915 1)" fill="#ffff00">60</text>
<text class="e" transform="translate(146.0 371.6) scale(0.915 1)" fill="#ffff00">50</text>
<text class="e" transform="translate(146.0 432.6) scale(0.915 1)" fill="#ffff00">40</text>
<text class="e" transform="translate(146.0 493.6) scale(0.915 1)" fill="#ffff00">30</text>
<text class="e" transform="translate(146.0 554.6) scale(0.915 1)" fill="#ffff00">20</text>
<text class="e" transform="translate(146.0 615.6) scale(0.915 1)" fill="#ffff00">10</text>
<text class="e" transform="translate(146.0 676.6) scale(0.915 1)" fill="#ffff00">0</text>
<text transform="translate(1228.0 66.6) scale(0.915 1)" fill="#800080">100</text>
<text transform="translate(1228.0 127.6) scale(0.915 1)" fill="#800080">90</text>
<text transform="translate(1228.0 188.6) scale(0.915 1)" fill="#800080">80</text>
<text transform="translate(1228.0 249.6) scale(0.915 1)" fill="#800080">70</text>
<text transform="translate(1228.0 310.6) scale(0.915 1)" fill="#800080">60</text>
<text transform="translate(1228.0 371.6) scale(0.915 1)" fill="#800080">50</text>
<text transform="translate(1228.0 432.6) scale(0.915 1)" fill="#800080">40</text>
<text transform="translate(1228.0 493.6) scale(0.915 1)" fill="#800080">30</text>
<text transform="translate(1228.0 554.6) scale(0.915 1)" fill="#800080">20</text>
<text transform="translate(1228.0 615.6) scale(0.915 1)" fill="#800080">10</text>
<text transform="translate(1228.0 676.6) scale(0.915 1)" fill="#800080">0</text>
<text transform="translate(1265.0 676.6) scale(0.915 1)" fill="#00ffff">0.0</text>
<text transform="translate(1265.0 652.2) scale(0.915 1)" fill="#00ffff">0.2</text>
<text transform="translate(1265.0 627.8) scale(0.915 1)" fill="#00ffff">0.4</text>
<text transform="translate(1265.0 603.4) scale(0.915 1)" fill="#00ffff">0.6</text>
<text transform="translate(1265.0 579.0) scale(0.915 1)" fill="#00ffff">0.8</text>
<text transform="translate(1265.0 554.6) scale(0.915 1)" fill="#00ffff">1.0</text>
<text transform="translate(1265.0 530.2) scale(0.915 1)" fill="#00ffff">1.2</text>
<text transform="translate(1265.0 505.8) scale(0.915 1)" fill="#00ffff">1.4</text>
<text transform="translate(1265.0 481.4) scale(0.915 1)" fill="#00ffff">1.6</text>
<text transform="translate(1265.0 457.0) scale(0.915 1)" fill="#00ffff">1.8</text>
<text transform="translate(1265.0 432.6) scale(0.915 1)" fill="#00ffff">2.0</text>
<text transform="translate(1265.0 408.2) scale(0.915 1)" fill="#00ffff">2.2</text>
<text transform="translate(1265.0 383.8) scale(0.915 1)" fill="#00ffff">2.4</text>
<text transform="translate(1265.0 359.4) scale(0.915 1)" fill="#00ffff">2.6</text>
<text transform="translate(1265.0 335.0) scale(0.915 1)" fill="#00ffff">2.8</text>
<text transform="translate(1265.0 310.6) scale(0.915 1)" fill="#00ffff">3.0</text>
<text transform="translate(1265.0 286.2) scale(0.915 1)" fill="#00ffff">3.2</text>
<text transform="translate(1265.0 261.8) scale(0.915 1)" fill="#00ffff">3.4</text>
<text transform="translate(1265.0 237.4) scale(0.915 1)" fill="#00ffff">3.6</text>
<text transform="translate(1265.0 213.0) scale(0.915 1)" fill="#00ffff">3.8</text>
<text transform="translate(1265.0 188.6) scale(0.915 1)" fill="#00ffff">4.0</text>
<text transform="translate(1265.0 164.2) scale(0.915 1)" fill="#00ffff">4.2</text>
<text transform="translate(1265.0 139.8) scale(0.915 1)" fill="#00ffff">4.4</text>
<text transform="translate(1265.0 115.4) scale(0.915 1)" fill="#00ffff">4.6</text>
<text transform="translate(1265.0 91.0) scale(0.915 1)" fill="#00ffff">4.8</text>
<text transform="translate(1302.0 66.6) scale(0.915 1)" fill="#808080">360 N</text>
<text transform="translate(1302.0 117.4) scale(0.915 1)" fill="#808080">330</text>
<text transform="translate(1302.0 168.3) scale(0.915 1)" fill="#808080">300</text>
<text transform="translate(1302.0 219.1) scale(0.915 1)" fill="#808080">270 W</text>
<text transform="translate(1302.0 269.9) scale(0.915 1)" fill="#808080">240</text>
<text transform="translate(1302.0 320.8) scale(0.915 1)" fill="#808080">210</text>
<text transform="translate(1302.0 371.6) scale(0.915 1)" fill="#808080">180 S</text>
<text transform="translate(1302.0 422.4) scale(0.915 1)" fill="#808080">150</text>
<text transform="translate(1302.0 473.3) scale(0.915 1)" fill="#808080">120</text>
<text transform="translate(1302.0 524.1) scale(0.915 1)" fill="#808080">90 O</text>
<text transform="translate(1302.0 574.9) scale(0.915 1)" fill="#808080">60</text>
<text transform="translate(1302.0 625.8) scale(0.915 1)" fill="#808080">30</text>
<text transform="translate(1302.0 676.6) scale(0.915 1)" fill="#808080">0</text>
<text transform="translate(1320.0 676.6) scale(0.915 1)" fill="#808080">N</text>
<text transform="translate(1339.0 676.6) scale(0.915 1)" fill="#e0b000">0</text>
<text transform="translate(20.0 51.0) scale(0.915 1)" fill="#ff007f">°C</text>
<text transform="translate(48.0 51.0) scale(0.915 1)" fill="#00e000">hPa</text>
<text transform="translate(79.0 51.0) scale(0.915 1)" fill="#000">km/h</text>
<text transform="translate(125.0 51.0) scale(0.915 1)" fill="#ffff00">min</text>
<text transform="translate(1222.0 51.0) scale(0.915 1)" fill="#800080">%</text>
<text transform="translate(1257.0 51.0) scale(0.915 1)" fill="#00ffff">l/m²</text>
<text transform="translate(1295.0 51.0) scale(0.915 1)" fill="#808080">°</text>
<text transform="translate(1332.0 51.0) scale(0.915 1)" fill="#e0b000">W/m²</text>
<text class="m" transform="translate(152.0 690.5) scale(0.915 1)" fill="#000">00:00</text>
<text class="m" transform="translate(196.6 690.5) scale(0.915 1)" fill="#000">01:00</text>
<text class="m" transform="translate(241.1 690.5) scale(0.915 1)" fill="#000">02:00</text>
<text class="m" transform="translate(285.7 690.5) scale(0.915 1)" fill="#000">03:00</text>
<text class="m" transform="translate(330.3 690.5) scale(0.915 1)" fill="#000">04:00</text>
<text class="m" transform="translate(374.9 690.5) scale(0.915 1)" fill="#000">05:00</text>
<text class="m" transform="translate(419.4 690.5) scale(0.915 1)" fill="#000">06:00</text>
<text class="m" transform="translate(464.0 690.5) scale(0.915 1)" fill="#000">07:00</text>
<text class="m" transform="translate(508.6 690.5) scale(0.915 1)" fill="#000">08:00</text>
<text class="m" transform="translate(553.1 690.5) scale(0.915 1)" fill="#000">09:00</text>
<text class="m" transform="translate(597.7 690.5) scale(0.915 1)" fill="#000">10:00</text>
<text class="m" transform="translate(642.3 690.5) scale(0.915 1)" fill="#000">11:00</text>
<text class="m" transform="translate(686.9 690.5) scale(0.915 1)" fill="#000">12:00</text>
<text class="m" transform="translate(731.4 690.5) scale(0.915 1)" fill="#000">13:00</text>
<text class="m" transform="translate(776.0 690.5) scale(0.915 1)" fill="#000">14:00</text>
<text class="m" transform="translate(820.6 690.5) scale(0.915 1)" fill="#000">15:00</text>
<text class="m" transform="translate(865.1 690.5) scale(0.915 1)" fill="#000">16:00</text>
<text class="m" transform="translate(909.7 690.5) scale(0.915 1)" fill="#000">17:00</text>
<text class="m" transform="translate(954.3 690.5) scale(0.915 1)" fill="#000">18:00</text>
<text class="m" transform="translate(998.8 690.5) scale(0.915 1)" fill="#000">19:00</text>
<text class="m" transform="translate(1043.4 690.5) scale(0.915 1)" fill="#000">20:00</text>
<text class="m" transform="translate(1088.0 690.5) scale(0.915 1)" fill="#000">21:00</text>
<text class="m" transform="translate(1132.6 690.5) scale(0.915 1)" fill="#000">22:00</text>
<text class="m" transform="translate(1177.1 690.5) scale(0.915 1)" fill="#000">23:00</text>
<text class="m" transform="translate(1221.7 690.5) scale(0.915 1)" fill="#000">24:00</text>
<path class="ax" d="M151.5 672V677M196.5 672V677M240.5 672V677M285.5 672V677M329.5 672V677M374.5 672V677M418.5 672V677M463.5 672V677M508.5 672V677M552.5 672V677M597.5 672V677M641.5 672V677M686.5 672V677M730.5 672V677M775.5 672V677M820.5 672V677M864.5 672V677M909.5 672V677M953.5 672V677M998.5 672V677M1042.5 672V677M1087.5 672V677M1132.5 672V677M1176.5 672V677M1221.5 672V677"/>
<text class="m" transform="translate(687.5 21.0) scale(0.990 1)" fill="#000" style="font-size:16px">Dienstag, 28.06.2011</text>
<rect x="161.5" y="33.5" width="9" height="9" fill="#ff007f" stroke="#000" stroke-width="1" shape-rendering="crispEdges"/>
<text transform="translate(175.5 42.0) scale(0.915 1)" fill="#ff007f">Temp. A.</text>
<rect x="161.5" y="47.5" width="9" height="9" fill="#ff8000" stroke="#000" stroke-width="1" shape-rendering="crispEdges"/>
<text transform="translate(175.5 56.0) scale(0.915 1)" fill="#ff007f">Windchill</text>
<rect x="256.5" y="33.5" width="9" height="9" fill="#ff8040" stroke="#000" stroke-width="1" shape-rendering="crispEdges"/>
<text transform="translate(270.5 42.0) scale(0.915 1)" fill="#ff007f">Temp. A. min</text>
<rect x="256.5" y="47.5" width="9" height="9" fill="#000090" stroke="#000" stroke-width="1" shape-rendering="crispEdges"/>
<text transform="translate(270.5 56.0) scale(0.915 1)" fill="#000">Windböen</text>
<rect x="351.5" y="33.5" width="9" height="9" fill="#ff8000" stroke="#000" stroke-width="1" shape-rendering="crispEdges"/>
<text transform="translate(365.5 42.0) scale(0.915 1)" fill="#ff007f">Temp. A. max</text>
<rect x="446.5" y="33.5" width="9" height="9" fill="#800080" stroke="#000" stroke-width="1" shape-rendering="crispEdges"/>
<text transform="translate(460.5 42.0) scale(0.915 1)" fill="#800080">Feuchte A.*</text>
<rect x="541.5" y="33.5" width="9" height="9" fill="#00ff00" stroke="#000" stroke-width="1" shape-rendering="crispEdges"/>
<text transform="translate(555.5 42.0) scale(0.915 1)" fill="#00e000">Luftdruck*</text>
<rect x="636.5" y="33.5" width="9" height="9" fill="#00ffff" stroke="#000" stroke-width="1" shape-rendering="crispEdges"/>
<text transform="translate(650.5 42.0) scale(0.915 1)" fill="#00ffff">Regen</text>
<rect x="731.5" y="33.5" width="9" height="9" fill="#000000" stroke="#000" stroke-width="1" shape-rendering="crispEdges"/>
<text transform="translate(745.5 42.0) scale(0.915 1)" fill="#000">Wind*</text>
<rect x="826.5" y="33.5" width="9" height="9" fill="#808080" stroke="#000" stroke-width="1" shape-rendering="crispEdges"/>
<text transform="translate(840.5 42.0) scale(0.915 1)" fill="#808080">Richtung*</text>
<rect x="921.5" y="33.5" width="9" height="9" fill="#ffff00" stroke="#000" stroke-width="1" shape-rendering="crispEdges"/>
<text transform="translate(935.5 42.0) scale(0.915 1)" fill="#ffff00">Sonnenschein</text>
<rect x="1016.5" y="33.5" width="9" height="9" fill="#e0b000" stroke="#000" stroke-width="1" shape-rendering="crispEdges"/>
<text transform="translate(1030.5 42.0) scale(0.915 1)" fill="#e0b000">Solar</text>
<rect x="1111.5" y="33.5" width="9" height="9" fill="#408080" stroke="#000" stroke-width="1" shape-rendering="crispEdges"/>
<text transform="translate(1125.5 42.0) scale(0.915 1)" fill="#ff007f">Taupunkt</text>
<path d="M351.5 57V47.5H360.5V56.5H357" fill="none" stroke="#ff007f" shape-rendering="crispEdges"/>
<text transform="translate(365.5 56.0) scale(0.915 1)" fill="#ff007f">15.2 Monat-Ø</text>
<g shape-rendering="crispEdges">
<rect x="275" y="668" width="2" height="13" fill="#808080"/>
<rect x="384" y="668" width="2" height="13" fill="#ffff00"/>
<rect x="1006" y="668" width="2" height="13" fill="#808080"/>
<rect x="1123" y="668" width="2" height="13" fill="#ffff00"/>
</g>
<text transform="translate(11.0 701.5) scale(0.915 1)" fill="#000">16:34</text>
<path d="M40 701.5a4.7 5.5 0 0 1 9.4 0z" fill="#ffee00"/>
<rect x="271.5" y="692.5" width="6" height="6" fill="none" stroke="#6070d0" stroke-width="1" stroke-dasharray="2 1"/>
<path d="M278.5 694.5l3.5 5h-2.2v3h-2.6v-3h-2.2z" fill="#ffe800" stroke="#403000" stroke-width="0.7"/>
<text transform="translate(283.0 701.5) scale(0.915 1)" fill="#000">02:48</text>
<text transform="translate(351.5 701.5) scale(0.915 1)" fill="#000">05:14</text>
<circle cx="385" cy="698" r="3.6" fill="#ffff00"/><path d="M380 693l10 10M390 693l-10 10M385 692v12M379 698h12" stroke="#ffff80" stroke-width="1"/>
<circle cx="385" cy="698" r="3.2" fill="#ffff00"/>
<path d="M1004 692h2.6v3h2.2l-3.5 5l-3.5-5h2.2z" fill="#ffe800" stroke="#403000" stroke-width="0.7"/>
<path d="M1007 701.5h6" stroke="#6070d0" stroke-width="1" stroke-dasharray="2 1"/>
<text transform="translate(1014.5 701.5) scale(0.915 1)" fill="#000">19:12</text>
<text transform="translate(1091.0 701.5) scale(0.915 1)" fill="#000">21:49</text>
<rect x="1121.5" y="695.5" width="5" height="5" fill="none" stroke="#ffee00" stroke-width="1.2"/>
<g id="panel">
<rect x="1" y="704" width="1372" height="90" fill="#cdf9f6"/>
<rect x="1372" y="704" width="1" height="91" fill="#a8a8a8"/>
<rect x="88" y="705" width="1" height="88" fill="#808080" shape-rendering="crispEdges"/><rect x="89" y="705" width="1" height="88" fill="#ffffff" shape-rendering="crispEdges"/>
<rect x="206" y="705" width="1" height="88" fill="#808080" shape-rendering="crispEdges"/><rect x="207" y="705" width="1" height="88" fill="#ffffff" shape-rendering="crispEdges"/>
<rect x="323" y="705" width="1" height="88" fill="#808080" shape-rendering="crispEdges"/><rect x="324" y="705" width="1" height="88" fill="#ffffff" shape-rendering="crispEdges"/>
<rect x="441" y="705" width="1" height="88" fill="#808080" shape-rendering="crispEdges"/><rect x="442" y="705" width="1" height="88" fill="#ffffff" shape-rendering="crispEdges"/>
<rect x="559" y="705" width="1" height="88" fill="#808080" shape-rendering="crispEdges"/><rect x="560" y="705" width="1" height="88" fill="#ffffff" shape-rendering="crispEdges"/>
<rect x="677" y="705" width="1" height="88" fill="#808080" shape-rendering="crispEdges"/><rect x="678" y="705" width="1" height="88" fill="#ffffff" shape-rendering="crispEdges"/>
<rect x="795" y="705" width="1" height="88" fill="#808080" shape-rendering="crispEdges"/><rect x="796" y="705" width="1" height="88" fill="#ffffff" shape-rendering="crispEdges"/>
<rect x="913" y="705" width="1" height="88" fill="#808080" shape-rendering="crispEdges"/><rect x="914" y="705" width="1" height="88" fill="#ffffff" shape-rendering="crispEdges"/>
<text class="b" transform="translate(8.7 722.3) scale(0.980 1)" fill="#000">Sensor</text>
<text class="b" transform="translate(8.7 738.3) scale(0.980 1)" fill="#000">MinWert</text>
<text class="b" transform="translate(8.7 754.3) scale(0.980 1)" fill="#000">MaxWert</text>
<text class="b" transform="translate(8.7 770.3) scale(0.980 1)" fill="#000">Durchschnitt</text>
<text class="b" transform="translate(8.7 786.3) scale(1.075 1)" fill="#000">28.06. 23:55</text>
<text class="b" transform="translate(95.0 722.3) scale(0.980 1)" fill="#000">Temp. A.</text>
<text class="e b" transform="translate(199.0 722.3) scale(0.980 1)" fill="#000">°C</text>
<text transform="translate(101.0 738.3) scale(0.915 1)" fill="#000">05:45</text>
<text class="e" transform="translate(199.0 738.3) scale(0.915 1)" fill="#000">21.8</text>
<text transform="translate(101.0 754.3) scale(0.915 1)" fill="#000">20:45</text>
<text class="e" transform="translate(199.0 754.3) scale(0.915 1)" fill="#000">32.0</text>
<text transform="translate(99.3 770.3) scale(0.915 1)" fill="#000">(+ 12.38 )</text>
<text class="e" transform="translate(199.0 770.3) scale(0.915 1)" fill="#000">27.58</text>
<text transform="translate(97.3 786.3) scale(0.915 1)" fill="#000">F: 55 %</text>
<text class="e b" transform="translate(199.0 786.3) scale(1.075 1)" fill="#000">25.8</text>
<text class="b" transform="translate(212.7 722.3) scale(0.980 1)" fill="#000">Feuchte A.</text>
<text class="e b" transform="translate(316.0 722.3) scale(0.980 1)" fill="#000">%</text>
<text transform="translate(218.3 738.3) scale(0.915 1)" fill="#000">17:35</text>
<text class="e" transform="translate(316.0 738.3) scale(0.915 1)" fill="#000">28</text>
<text transform="translate(218.3 754.3) scale(0.915 1)" fill="#000">06:55</text>
<text class="e" transform="translate(316.0 754.3) scale(0.915 1)" fill="#000">61</text>
<text class="e" transform="translate(316.0 770.3) scale(0.915 1)" fill="#000">48</text>
<text transform="translate(216.0 786.3) scale(0.915 1)" fill="#000">13.24 g/m³</text>
<text class="e b" transform="translate(316.0 786.3) scale(1.075 1)" fill="#000">55</text>
<text class="b" transform="translate(330.7 722.3) scale(0.980 1)" fill="#000">Luftdruck</text>
<text class="e b" transform="translate(435.0 722.3) scale(0.980 1)" fill="#000">hPa</text>
<text transform="translate(337.3 738.3) scale(0.915 1)" fill="#000">19:55</text>
<text class="e" transform="translate(435.0 738.3) scale(0.915 1)" fill="#000">1011.5</text>
<text transform="translate(337.3 754.3) scale(0.915 1)" fill="#000">00:15</text>
<text class="e" transform="translate(435.0 754.3) scale(0.915 1)" fill="#000">1016.0</text>
<text transform="translate(330.7 770.3) scale(0.915 1)" fill="#000">^1.3hPa/h</text>
<text class="e" transform="translate(435.0 770.3) scale(0.915 1)" fill="#000">1014.5</text>
<text transform="translate(330.7 786.3) scale(0.915 1)" fill="#000">sonnig</text>
<text class="e b" transform="translate(435.0 786.3) scale(1.075 1)" fill="#000">1014.2</text>
<rect x="386" y="776" width="8" height="12" fill="#e8fffd"/>
<path d="M390 777l4 5h-2.8v5.5h-2.4v-5.5h-2.8z" fill="#000"/>
<text class="b" transform="translate(448.3 722.3) scale(0.980 1)" fill="#000">Wind</text>
<text class="e b" transform="translate(552.3 722.3) scale(0.980 1)" fill="#000">km/h</text>
<text transform="translate(448.3 738.3) scale(0.915 1)" fill="#000">Ø 10 min.</text>
<text class="e" transform="translate(552.3 738.3) scale(0.915 1)" fill="#000">3.5</text>
<text transform="translate(455.0 754.3) scale(0.915 1)" fill="#000">00:55</text>
<text class="e" transform="translate(552.3 754.3) scale(0.915 1)" fill="#000">S-SO 15.1</text>
<text transform="translate(455.0 770.3) scale(0.915 1)" fill="#000">88.3 km</text>
<text class="e" transform="translate(552.3 770.3) scale(0.915 1)" fill="#000">2.7</text>
<text transform="translate(455.0 786.3) scale(0.915 1)" fill="#000">1 Bft N-NO</text>
<text class="e b" transform="translate(552.3 786.3) scale(1.075 1)" fill="#000">2.0</text>
<text class="b" transform="translate(566.7 722.3) scale(0.980 1)" fill="#000">Richtung</text>
<text transform="translate(572.7 738.3) scale(0.915 1)" fill="#000">23:55</text>
<text class="e" transform="translate(669.3 738.3) scale(0.915 1)" fill="#000">N-NO</text>
<text transform="translate(572.7 754.3) scale(0.915 1)" fill="#000">23:20</text>
<text class="e" transform="translate(669.3 754.3) scale(0.915 1)" fill="#000">N</text>
<text class="e" transform="translate(669.3 770.3) scale(0.915 1)" fill="#000">SO</text>
<text transform="translate(570.0 786.3) scale(0.915 1)" fill="#000">22 °</text>
<text class="e b" transform="translate(669.3 786.3) scale(0.980 1)" fill="#000">N-NO</text>
<text class="b" transform="translate(685.0 722.3) scale(0.980 1)" fill="#000">Regen</text>
<text class="e b" transform="translate(788.3 722.3) scale(0.980 1)" fill="#000">l/m²</text>
<text transform="translate(685.0 738.3) scale(0.915 1)" fill="#000">0 min.</text>
<text transform="translate(690.7 754.3) scale(0.915 1)" fill="#000">23:55</text>
<text class="e" transform="translate(788.3 754.3) scale(0.915 1)" fill="#000">0.0</text>
<text transform="translate(685.0 770.3) scale(0.915 1)" fill="#000">Gesamt:</text>
<text class="e" transform="translate(788.3 770.3) scale(0.915 1)" fill="#000">0.0</text>
<text transform="translate(688.3 786.3) scale(0.915 1)" fill="#000">0.0 l/m²</text>
<text class="e b" transform="translate(788.3 786.3) scale(1.075 1)" fill="#000">0.0</text>
<text transform="translate(802.7 722.3) scale(0.887 1)" fill="#000">Max. Sonnen</text>
<text class="e" transform="translate(906.3 722.3) scale(0.900 1)" fill="#000">61,888°</text>
<text transform="translate(802.7 738.3) scale(0.887 1)" fill="#000">Sonnen Pos</text>
<text class="e" transform="translate(906.3 738.3) scale(0.900 1)" fill="#000">-12,327°</text>
<text transform="translate(802.7 754.3) scale(0.887 1)" fill="#000">Neumond</text>
<text class="e" transform="translate(905.0 754.3) scale(0.900 1)" fill="#000">01.07.11</text>
<text transform="translate(802.7 770.3) scale(0.887 1)" fill="#000">Vollmond</text>
<text class="e" transform="translate(905.0 770.3) scale(0.900 1)" fill="#000">15.07.11</text>
<text transform="translate(802.7 786.3) scale(0.887 1)" fill="#000">Mondphase</text>
<text class="e" transform="translate(906.7 786.3) scale(0.900 1)" fill="#000">- 7%</text>
<text transform="translate(920.7 722.3) scale(0.887 1)" fill="#000">Wolkenunterg</text>
<text class="e" transform="translate(1022.7 722.3) scale(0.900 1)" fill="#000">1499m</text>
<text transform="translate(920.7 738.3) scale(0.887 1)" fill="#000">Sichtweite</text>
<text class="e" transform="translate(1022.7 738.3) scale(0.900 1)" fill="#000">4-8km</text>
<text transform="translate(920.7 754.3) scale(0.887 1)" fill="#000">Schneefallgr</text>
<text class="e" transform="translate(1022.7 754.3) scale(0.900 1)" fill="#000">3570m</text>
<text transform="translate(920.7 770.3) scale(0.887 1)" fill="#000">Regen/1h</text>
<text class="e" transform="translate(1022.7 770.3) scale(0.900 1)" fill="#000">0.0l/m²</text>
<text transform="translate(920.7 786.3) scale(0.887 1)" fill="#000">Sonnenschein</text>
<text class="e" transform="translate(1023.3 786.3) scale(0.900 1)" fill="#000">0:00h</text>
</g>
<g shape-rendering="crispEdges">
<rect x="0" y="794" width="1373" height="6" fill="#e6e6e6"/>
<rect x="0" y="794" width="1373" height="1" fill="#c0c0c0"/>
<rect x="2" y="796" width="833" height="4" fill="#f2f2f2"/>
<rect x="2" y="796" width="833" height="1" fill="#8c8c8c"/>
<rect x="2" y="796" width="1" height="4" fill="#8c8c8c"/>
<rect x="835" y="796" width="1" height="4" fill="#ffffff"/>
<rect x="839" y="796" width="192" height="4" fill="#f2f2f2"/>
<rect x="839" y="796" width="192" height="1" fill="#8c8c8c"/>
<rect x="839" y="796" width="1" height="4" fill="#8c8c8c"/>
<rect x="1031" y="796" width="1" height="4" fill="#ffffff"/>
<rect x="1035" y="796" width="169" height="4" fill="#f2f2f2"/>
<rect x="1035" y="796" width="169" height="1" fill="#8c8c8c"/>
<rect x="1035" y="796" width="1" height="4" fill="#8c8c8c"/>
<rect x="1204" y="796" width="1" height="4" fill="#ffffff"/>
<rect x="1208" y="796" width="39" height="4" fill="#f2f2f2"/>
<rect x="1208" y="796" width="39" height="1" fill="#8c8c8c"/>
<rect x="1208" y="796" width="1" height="4" fill="#8c8c8c"/>
<rect x="1247" y="796" width="1" height="4" fill="#ffffff"/>
<rect x="1251" y="796" width="51" height="4" fill="#f2f2f2"/>
<rect x="1251" y="796" width="51" height="1" fill="#8c8c8c"/>
<rect x="1251" y="796" width="1" height="4" fill="#8c8c8c"/>
<rect x="1302" y="796" width="1" height="4" fill="#ffffff"/>
<rect x="1306" y="796" width="63" height="4" fill="#f2f2f2"/>
<rect x="1306" y="796" width="63" height="1" fill="#8c8c8c"/>
<rect x="1306" y="796" width="1" height="4" fill="#8c8c8c"/>
<rect x="1369" y="796" width="1" height="4" fill="#ffffff"/>
</g>
<defs><linearGradient id="dsk" x1="0" y1="0" x2="0" y2="1"><stop offset="0" stop-color="#02244a"/><stop offset="0.12" stop-color="#032c58"/><stop offset="0.22" stop-color="#043a72"/><stop offset="0.32" stop-color="#054c8e"/><stop offset="0.5" stop-color="#05407c"/><stop offset="0.75" stop-color="#03305e"/><stop offset="1" stop-color="#02264c"/></linearGradient></defs>
<rect x="1373" y="0" width="8" height="800" fill="url(#dsk)"/>
<rect x="1373" y="0" width="1" height="800" fill="#0e62c0" opacity="0.85"/>
</svg>
<!--PANEL-->
</body></html>
